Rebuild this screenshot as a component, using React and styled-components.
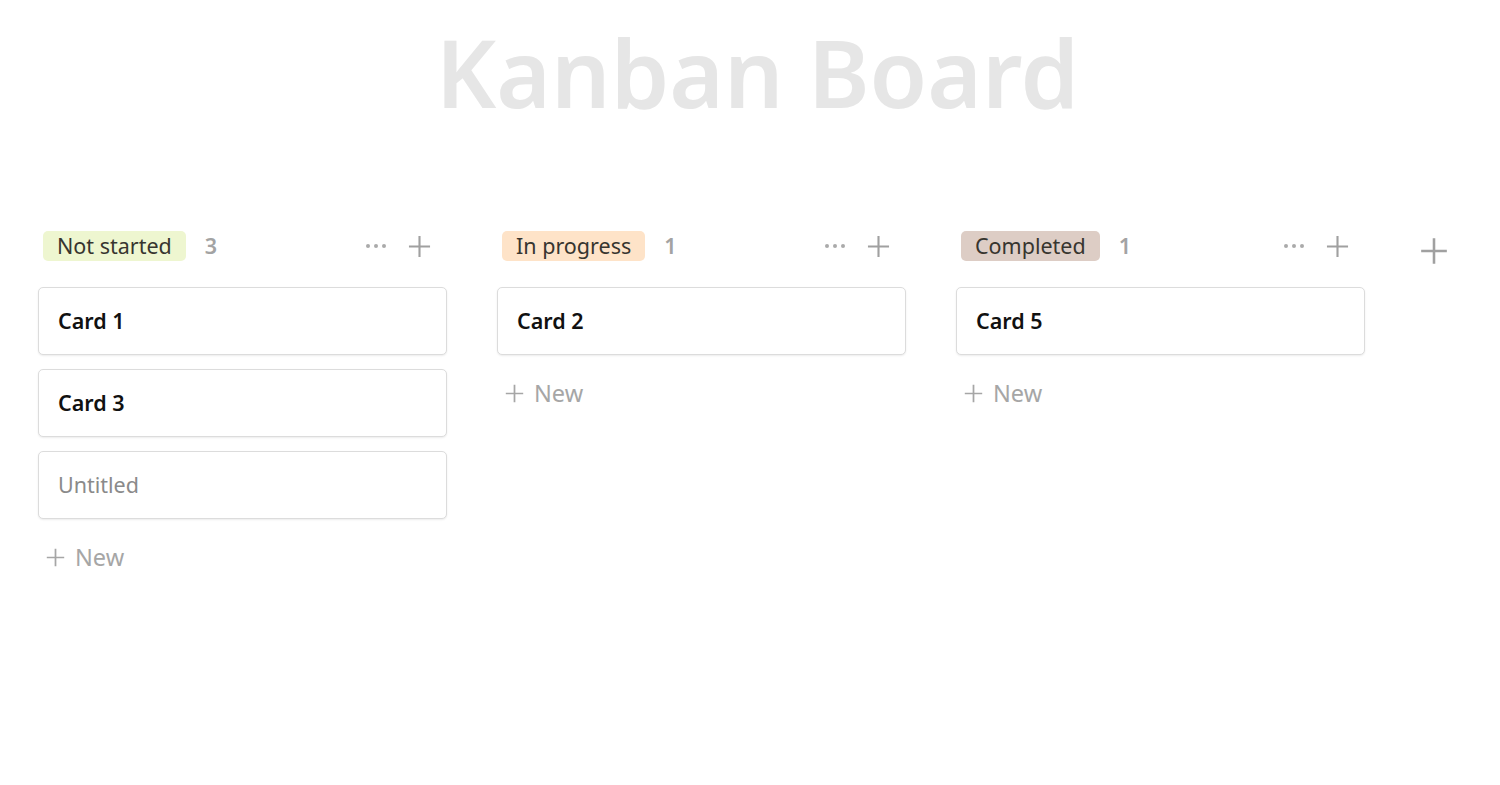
import React from "react";
import styled, { createGlobalStyle } from "styled-components";

const GlobalStyle = createGlobalStyle`
  body {
    margin: 0;
    background: #ffffff;
    font-family: "Noto Sans", "Open Sans", sans-serif;
  }
`;

const Page = styled.div`
  padding: 9px 38px 0;
`;

const Title = styled.h1`
  margin: 0;
  padding-left: 15px;
  text-align: center;
  font-size: 93.5px;
  font-weight: 600;
  line-height: 125px;
  color: #e6e6e6;
`;

const Board = styled.div`
  display: flex;
  align-items: flex-start;
  gap: 50px;
  margin-top: 97px;
`;

const Column = styled.div`
  width: 409px;
  flex-shrink: 0;
`;

const ColumnHeader = styled.div`
  display: flex;
  align-items: center;
  height: 30px;
  padding-left: 5px;
`;

const Tag = styled.span`
  display: inline-flex;
  align-items: center;
  height: 30px;
  padding: 0 14px 1px;
  box-sizing: border-box;
  border-radius: 5px;
  background: ${(p) => p.bg};
  color: #37352f;
  font-size: 21.5px;
`;

const Count = styled.span`
  margin-left: 19px;
  padding-bottom: 1px;
  color: #a3a3a3;
  font-size: 21.5px;
  font-weight: 600;
`;

const Actions = styled.div`
  display: flex;
  align-items: center;
  gap: 21px;
  margin-left: auto;
  padding-right: 16px;
`;

const IconButton = styled.button`
  display: flex;
  align-items: center;
  justify-content: center;
  padding: 0;
  border: none;
  background: none;
  color: ${(p) => p.color || "#a0a0a0"};
  cursor: pointer;
`;

const CardList = styled.div`
  display: flex;
  flex-direction: column;
  gap: 14px;
  margin-top: 26px;
`;

const Card = styled.div`
  display: flex;
  align-items: center;
  height: 68px;
  box-sizing: border-box;
  padding: 0 19px 2px;
  border: 1px solid #dcdcdc;
  border-radius: 5px;
  box-shadow: 0 1px 2px rgba(0, 0, 0, 0.08);
  background: #fff;
  font-size: 21.5px;
  font-weight: ${(p) => (p.untitled ? 400 : 600)};
  color: ${(p) => (p.untitled ? "#8a8a8a" : "#111")};
`;

const NewButton = styled.div`
  display: flex;
  align-items: center;
  gap: 10px;
  margin-top: 22px;
  padding-left: 8px;
  color: #a6a6a6;
  font-size: 23.5px;
`;

const AddColumn = styled.div`
  padding-top: 6px;
  margin-left: 5px;
`;

const Plus = ({ size = 24, width = 2 }) => (
  <svg width={size} height={size} viewBox="0 0 24 24" fill="none">
    <path d="M12 1v22M1 12h22" stroke="currentColor" strokeWidth={width} />
  </svg>
);

const Dots = () => (
  <svg width="22" height="6" viewBox="0 0 22 6" fill="currentColor">
    <circle cx="3" cy="3" r="2" />
    <circle cx="11" cy="3" r="2" />
    <circle cx="19" cy="3" r="2" />
  </svg>
);

const columns = [
  {
    name: "Not started",
    bg: "#eef6d0",
    cards: [{ title: "Card 1" }, { title: "Card 3" }, { title: "Untitled", untitled: true }],
  },
  { name: "In progress", bg: "#fee3c8", cards: [{ title: "Card 2" }] },
  { name: "Completed", bg: "#ddcdc5", cards: [{ title: "Card 5" }] },
];

export default function App() {
  return (
    <Page>
      <GlobalStyle />
      <Title>Kanban Board</Title>
      <Board>
        {columns.map((col) => (
          <Column key={col.name}>
            <ColumnHeader>
              <Tag bg={col.bg}>{col.name}</Tag>
              <Count>{col.cards.length}</Count>
              <Actions>
                <IconButton color="#aaaaaa">
                  <Dots />
                </IconButton>
                <IconButton>
                  <Plus size={23} width={2.2} />
                </IconButton>
              </Actions>
            </ColumnHeader>
            <CardList>
              {col.cards.map((c) => (
                <Card key={c.title} untitled={c.untitled}>
                  {c.title}
                </Card>
              ))}
            </CardList>
            <NewButton>
              <Plus size={19} width={2.2} />
              New
            </NewButton>
          </Column>
        ))}
        <AddColumn>
          <IconButton>
            <Plus size={28} width={2.2} />
          </IconButton>
        </AddColumn>
      </Board>
    </Page>
  );
}
